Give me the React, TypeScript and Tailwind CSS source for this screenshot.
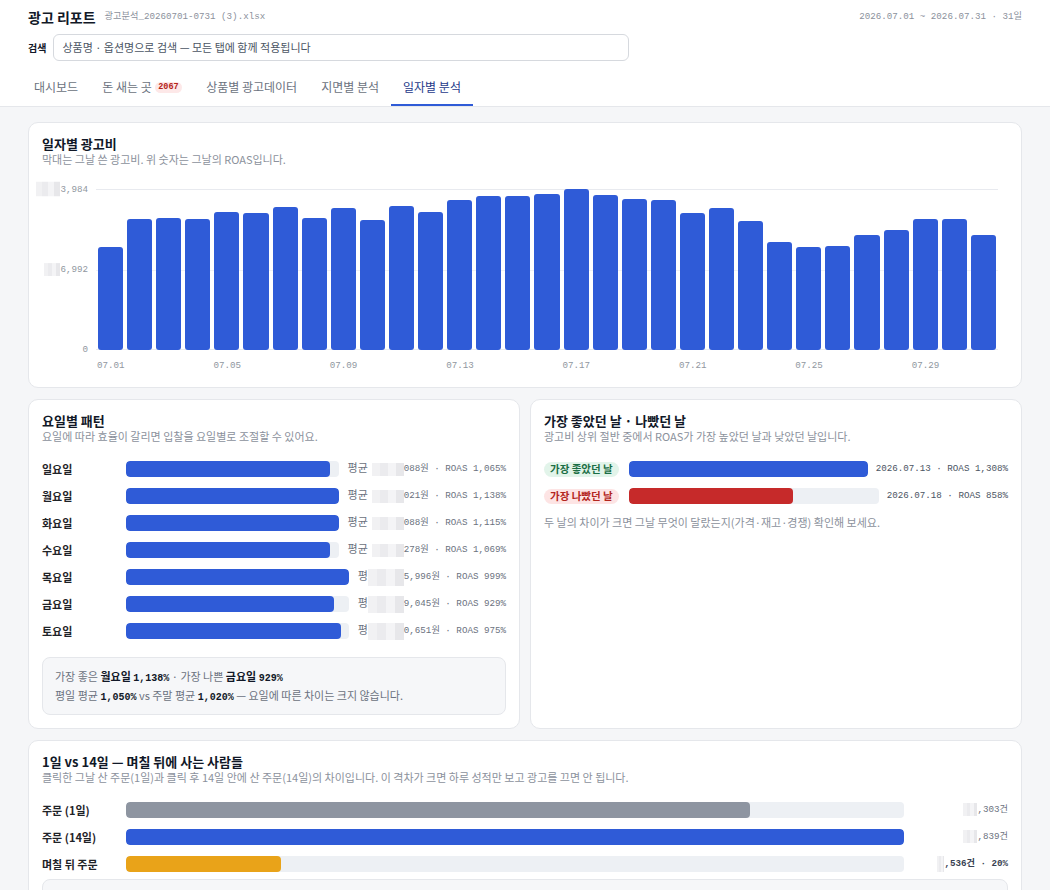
import React from 'react';

const SANS = "font-['Noto_Sans_CJK_KR','Noto_Sans',sans-serif]";
const MONO = "font-['Liberation_Mono','Noto_Sans_CJK_KR',monospace]";

// daily spend, relative to the tallest day
const spend = [
  0.641, 0.814, 0.82, 0.816, 0.858, 0.85, 0.887, 0.82, 0.883, 0.808, 0.896, 0.86, 0.933, 0.958, 0.954,
  0.966, 1.0, 0.964, 0.937, 0.929, 0.85, 0.883, 0.802, 0.67, 0.637, 0.644, 0.714, 0.747, 0.812, 0.814,
  0.714,
];

const weekdays = [
  { day: '일요일', fill: 96, short: false, value: '088원 · ROAS 1,065%' },
  { day: '월요일', fill: 100, short: false, value: '021원 · ROAS 1,138%' },
  { day: '화요일', fill: 100, short: false, value: '088원 · ROAS 1,115%' },
  { day: '수요일', fill: 96, short: false, value: '278원 · ROAS 1,069%' },
  { day: '목요일', fill: 100, short: true, value: '5,996원 · ROAS 999%' },
  { day: '금요일', fill: 93.5, short: true, value: '9,045원 · ROAS 929%' },
  { day: '토요일', fill: 96.7, short: true, value: '0,651원 · ROAS 975%' },
];

const tabs = ['대시보드', '돈 새는 곳', '상품별 광고데이터', '지면별 분석', '일자별 분석'];

function Redact({ className }: { className: string }) {
  return (
    <span className={`inline-flex shrink-0 overflow-hidden ${className}`}>
      <span className="h-full flex-1 bg-[#f1f1f3]" />
      <span className="h-full flex-1 bg-[#ebebee]" />
      <span className="h-full flex-1 bg-[#f4f4f6]" />
      <span className="h-full flex-1 bg-[#e7e7ea]" />
    </span>
  );
}

function Card({ title, subtitle, children }: { title: string; subtitle: string; children: React.ReactNode }) {
  return (
    <section className="rounded-[10px] border border-[#e5e7eb] bg-white px-[13px] pt-[13px] pb-[13px]">
      <h2 className="text-[13px] font-bold leading-4 text-[#111827]">{title}</h2>
      <p className="text-[11px] leading-[14px] text-[#8b919c]">{subtitle}</p>
      {children}
    </section>
  );
}

function Track({ fill, color }: { fill: number; color: string }) {
  return (
    <div className="h-4 flex-1 overflow-hidden rounded-[4px] bg-[#edf0f4]">
      <div className={`h-full rounded-[4px] ${color}`} style={{ width: `${fill}%` }} />
    </div>
  );
}

function Num({ children }: { children: React.ReactNode }) {
  return <b className={`text-[10px] leading-none text-[#111827] ${MONO}`}>{children}</b>;
}

function DailyChart() {
  return (
    <div className="mt-[23px] pb-[2px]">
      <div className="flex">
        <div className={`relative h-[161px] w-[54px] shrink-0 text-[9.2px] text-[#9097a0] ${MONO}`}>
          <div className="absolute right-2 top-0 flex -translate-y-1/2 items-center">
            <Redact className="h-[15px] w-[24px]" />
            <span>3,984</span>
          </div>
          <div className="absolute right-2 top-1/2 flex -translate-y-1/2 items-center">
            <Redact className="h-[13px] w-[16px]" />
            <span>6,992</span>
          </div>
          <div className="absolute bottom-0 right-2 translate-y-1/2">0</div>
        </div>
        <div className="relative mr-[10px] h-[161px] flex-1">
          <div className="absolute inset-x-0 top-0 h-px bg-[#e8eaef]" />
          <div className="absolute inset-x-0 top-1/2 h-px bg-[#f0f1f4]" />
          <div className="absolute inset-x-0 bottom-0 h-px bg-[#e8eaef]" />
          <div className="relative flex h-full items-end">
            {spend.map((v, i) => (
              <div key={i} className="flex h-full flex-1 items-end px-[2px]">
                <div className="w-full rounded-[3px] bg-[#2f5bd7]" style={{ height: `${v * 100}%` }} />
              </div>
            ))}
          </div>
        </div>
      </div>
      <div className={`ml-[54px] mr-[10px] mt-[10px] flex h-3 text-[9.2px] leading-3 text-[#9097a0] ${MONO}`}>
        {spend.map((_, i) => (
          <div key={i} className="flex-1 whitespace-nowrap pl-px">
            {i % 4 === 0 ? `07.${String(i + 1).padStart(2, '0')}` : ''}
          </div>
        ))}
      </div>
    </div>
  );
}

export default function App() {
  return (
    <div className={`min-h-screen bg-[#f5f6f8] text-[#111827] ${SANS}`}>
      <header className="border-b border-[#e5e7eb] bg-white px-7 pt-[7px]">
        <div className="flex h-5 items-center justify-between">
          <div className="flex items-center gap-[9px]">
            <h1 className="text-[14px] font-bold leading-5">광고 리포트</h1>
            <span className={`text-[9.2px] text-[#8b919c] ${MONO}`}>광고분석_20260701-0731 (3).xlsx</span>
          </div>
          <span className={`text-[9.2px] text-[#8b919c] ${MONO}`}>2026.07.01 ~ 2026.07.31 · 31일</span>
        </div>
        <div className="mt-[7px] flex items-center gap-[7px]">
          <span className="text-[10px] font-bold">검색</span>
          <div className="flex h-[27px] w-[576px] items-center rounded-md border border-[#d6d9de] px-2 text-[11px] text-[#4b5563]">
            상품명 · 옵션명으로 검색 — 모든 탭에 함께 적용됩니다
          </div>
        </div>
        <nav className="-ml-1.5 mt-[9px] flex">
          {tabs.map((t, i) => {
            const active = i === tabs.length - 1;
            return (
              <div
                key={t}
                className={
                  active
                    ? 'flex h-9 items-center gap-[3px] border-b-2 border-[#2f5bd7] px-3 text-[12px] text-[#1e3a8a]'
                    : 'flex h-9 items-center gap-[3px] border-b-2 border-transparent px-3 text-[12px] text-[#6b7280]'
                }
              >
                {t}
                {i === 1 && (
                  <span
                    className={`rounded-full bg-[#fde8e8] px-[3.5px] text-[8.5px] font-bold leading-[11px] text-[#b42318] ${MONO}`}
                  >
                    2067
                  </span>
                )}
              </div>
            );
          })}
        </nav>
      </header>

      <main className="flex flex-col gap-[11px] px-7 pt-[15px]">
        <Card title="일자별 광고비" subtitle="막대는 그날 쓴 광고비. 위 숫자는 그날의 ROAS입니다.">
          <DailyChart />
        </Card>

        <div className="grid grid-cols-2 gap-[10px]">
          <Card title="요일별 패턴" subtitle="요일에 따라 효율이 갈리면 입찰을 요일별로 조절할 수 있어요.">
            <div className="mt-[18px] flex flex-col gap-[11px]">
              {weekdays.map((w) => (
                <div key={w.day} className="flex h-4 items-center">
                  <div className="w-[84px] shrink-0 text-[11px] font-bold text-[#1f2328]">{w.day}</div>
                  <Track fill={w.fill} color="bg-[#2f5bd7]" />
                  <div className={`ml-[9px] flex items-center whitespace-nowrap text-[9.2px] text-[#6b7280] ${MONO}`}>
                    {w.short ? (
                      <>
                        <span className="text-[11px]">평</span>
                        <Redact className="h-[17px] w-[36px]" />
                      </>
                    ) : (
                      <>
                        <span className="text-[11px]">평균</span>
                        <Redact className="ml-[4px] h-[13px] w-[32px]" />
                      </>
                    )}
                    <span>{w.value}</span>
                  </div>
                </div>
              ))}
            </div>
            <div className="mt-[18px] flex h-[58px] flex-col justify-center rounded-lg border border-[#e5e7eb] bg-[#f6f7f9] px-3 text-[11px] leading-[19px] text-[#6b7280]">
              <p>
                가장 좋은 <b className="text-[#111827]">월요일</b> <Num>1,138%</Num> · 가장 나쁜{' '}
                <b className="text-[#111827]">금요일</b> <Num>929%</Num>
              </p>
              <p>
                평일 평균 <Num>1,050%</Num> vs 주말 평균 <Num>1,020%</Num> — 요일에 따른 차이는 크지 않습니다.
              </p>
            </div>
          </Card>

          <Card title="가장 좋았던 날 · 나빴던 날" subtitle="광고비 상위 절반 중에서 ROAS가 가장 높았던 날과 낮았던 날입니다.">
            <div className="mt-[18px] flex flex-col gap-[11px]">
              <div className="flex h-4 items-center">
                <div className="flex w-[85px] shrink-0 items-center">
                  <span className="inline-flex h-[15px] items-center rounded-full bg-[#e2f4ea] px-[6px] text-[10.5px] font-semibold text-[#1b6e45]">
                    가장 좋았던 날
                  </span>
                </div>
                <Track fill={100} color="bg-[#2f5bd7]" />
                <span className={`ml-2 whitespace-nowrap text-[9.2px] text-[#4b5563] ${MONO}`}>2026.07.13 · ROAS 1,308%</span>
              </div>
              <div className="flex h-4 items-center">
                <div className="flex w-[85px] shrink-0 items-center">
                  <span className="inline-flex h-[15px] items-center rounded-full bg-[#fde4e4] px-[6px] text-[10.5px] font-semibold text-[#b3261e]">
                    가장 나빴던 날
                  </span>
                </div>
                <Track fill={65.6} color="bg-[#c62a2a]" />
                <span className={`ml-2 whitespace-nowrap text-[9.2px] text-[#4b5563] ${MONO}`}>2026.07.18 · ROAS 858%</span>
              </div>
            </div>
            <p className="mt-[11px] text-[11px] leading-[14px] text-[#8b919c]">
              두 날의 차이가 크면 그날 무엇이 달랐는지(가격·재고·경쟁) 확인해 보세요.
            </p>
          </Card>
        </div>

        <Card
          title="1일 vs 14일 — 며칠 뒤에 사는 사람들"
          subtitle="클릭한 그날 산 주문(1일)과 클릭 후 14일 안에 산 주문(14일)의 차이입니다. 이 격차가 크면 하루 성적만 보고 광고를 끄면 안 됩니다."
        >
          <div className="mt-[18px] flex flex-col gap-[11px]">
            <div className="flex h-4 items-center">
              <div className="w-[84px] shrink-0 text-[11px] font-bold text-[#1f2328]">주문 (1일)</div>
              <Track fill={80.2} color="bg-[#8e95a1]" />
              <div className={`ml-[9px] flex w-[95px] items-center justify-end text-[9.2px] text-[#6b7280] ${MONO}`}>
                <Redact className="h-[13px] w-[14px]" />
                <span>,303건</span>
              </div>
            </div>
            <div className="flex h-4 items-center">
              <div className="w-[84px] shrink-0 text-[11px] font-bold text-[#1f2328]">주문 (14일)</div>
              <Track fill={100} color="bg-[#2f5bd7]" />
              <div className={`ml-[9px] flex w-[95px] items-center justify-end text-[9.2px] text-[#6b7280] ${MONO}`}>
                <Redact className="h-[13px] w-[14px]" />
                <span>,839건</span>
              </div>
            </div>
            <div className="flex h-4 items-center">
              <div className="w-[84px] shrink-0 text-[11px] font-bold text-[#1f2328]">며칠 뒤 주문</div>
              <Track fill={19.9} color="bg-[#e9a319]" />
              <div className={`ml-[9px] flex w-[95px] items-center justify-end text-[9.2px] font-bold text-[#374151] ${MONO}`}>
                <Redact className="h-[16px] w-[7px]" />
                <span>,536건 · 20%</span>
              </div>
            </div>
          </div>
          <div className="mt-[7px] h-[60px] rounded-lg border border-[#e5e7eb] bg-[#f6f7f9]" />
        </Card>
      </main>
    </div>
  );
}
